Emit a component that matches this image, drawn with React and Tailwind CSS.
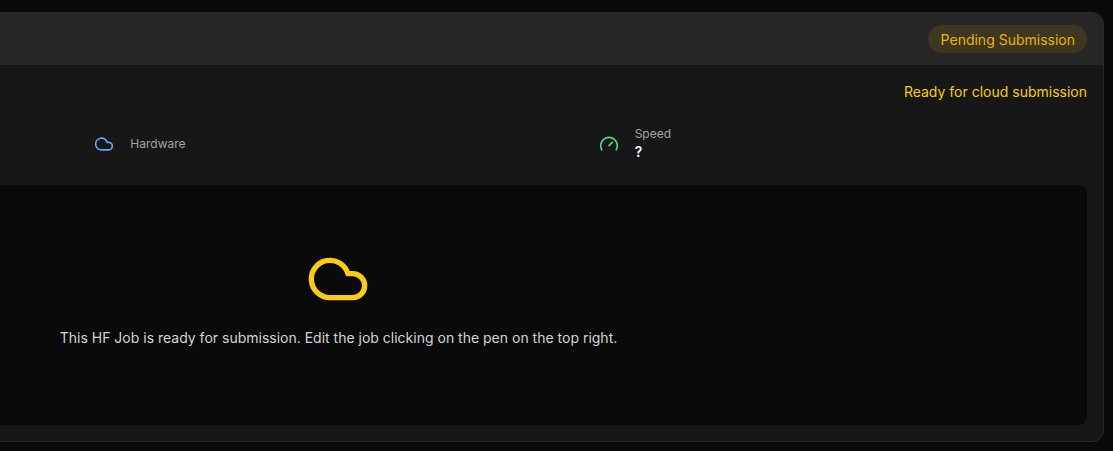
import React from "react";
import { Cloud, Gauge } from "lucide-react";

const App = () => {
  return (
    <div className="h-[451px] w-[1113px] overflow-hidden bg-[#0a0a0a] pt-3 font-['Inter',sans-serif]">
      {/* the card runs off the left side of the window */}
      <div className="ml-[-427px] flex h-[430px] w-[1531px] flex-col overflow-hidden rounded-xl border border-[#2a2a2a] bg-[#171717]">
        <div className="flex h-[52px] shrink-0 items-center justify-end bg-[#262626] px-4">
          <span className="rounded-full bg-[#3d3620] pt-[5px] pb-[3px] pl-[13px] pr-3 text-sm text-[#eab308]">Pending Submission</span>
        </div>
        <div className="flex min-h-0 flex-1 flex-col p-4 pt-[17px]">
          <div className="flex justify-end text-sm text-[#facc15]">Ready for cloud submission</div>
          <div className="mt-6 grid h-9 grid-cols-3 gap-4">
            <div />
            <div className="flex items-center gap-4">
              <Cloud className="h-5 w-5 text-[#60a5fa]" />
              <span className="text-xs text-[#a3a3a3]">Hardware</span>
            </div>
            <div className="flex items-center gap-4">
              <Gauge className="h-5 w-5 text-[#4ade80]" />
              <div className="flex flex-col">
                <span className="text-xs text-[#a3a3a3]">Speed</span>
                <span className="text-sm font-semibold text-[#f5f5f5]">?</span>
              </div>
            </div>
          </div>
          <div className="mt-[23px] flex flex-1 flex-col items-center justify-center rounded-lg bg-[#0a0a0a] pb-[15px]">
            <Cloud className="mr-0.5 h-16 w-16 text-[#facc15]" />
            <p className="mt-[17px] text-sm text-[#d4d4d4]">This HF Job is ready for submission. Edit the job clicking on the pen on the top right.</p>
          </div>
        </div>
      </div>
    </div>
  );
};

export default App;
